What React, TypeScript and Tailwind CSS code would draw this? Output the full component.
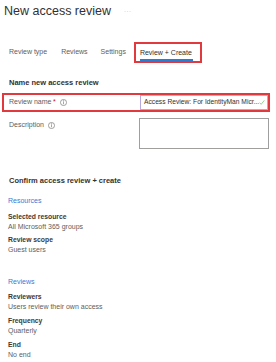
const InfoIcon = () => (
  <svg width="7" height="7" viewBox="0 0 16 16" fill="none" stroke="#605e5c" strokeWidth="1.3">
    <circle cx="8" cy="8" r="7" />
    <line x1="8" y1="7" x2="8" y2="12" />
    <circle cx="8" cy="4.5" r="0.6" fill="#605e5c" />
  </svg>
);

const CheckIcon = () => (
  <svg width="7" height="7" viewBox="0 0 16 16" fill="none" stroke="#5cb85c" strokeWidth="1.8" strokeLinecap="round" strokeLinejoin="round">
    <polyline points="2 9 6 13 14 3" />
  </svg>
);

function Field({ label, value }: { label: string; value: string }) {
  return (
    <div>
      <div className="text-[6.8px] leading-[10px] font-bold text-[#3b3a39]">{label}</div>
      <div className="text-[7px] leading-[10px] text-[#605e5c]">{value}</div>
    </div>
  );
}

export default function App() {
  return (
    <div
      className="w-[276px] h-[362px] bg-white overflow-hidden"
      style={{ fontFamily: '"Liberation Sans", Arial, sans-serif' }}
    >
      <div className="flex items-center h-[20px] pl-[4px] pt-[1px]">
        <span className="text-[12.5px] leading-[18px] text-[#323130]">New access review</span>
        <span className="ml-[13px] text-[6px] tracking-[0.5px] text-[#a19f9d] leading-[10px]">···</span>
      </div>

      <div className="flex items-center h-[21px] mt-[22px] text-[7px] text-[#605e5c]">
        <span className="ml-[9px]">Review type</span>
        <span className="ml-[14px]">Reviews</span>
        <span className="ml-[13px]">Settings</span>
        <div className="ml-[8px] h-[21px] w-[68px] border-2 border-[#e0393e] flex flex-col pl-[4px] pt-[4px]">
          <span className="text-[#323130] leading-[10px]">Review + Create</span>
          <div className="mt-[1px] h-[1.5px] w-[53px] bg-[#2b7cd3]" />
        </div>
      </div>

      <div className="mt-[14px] ml-[9px] text-[7.5px] leading-[12px] font-bold text-[#323130]">
        Name new access review
      </div>

      <div className="mt-[4px] ml-[2px] w-[268px] h-[19px] border-2 border-[#e0393e] flex items-center">
        <div className="flex items-center flex-1 pl-[5px] text-[7px] text-[#605e5c]">
          <span>Review name</span>
          <span className="ml-[1.5px] text-[#c50f1f]">*</span>
          <span className="ml-[4px] flex"><InfoIcon /></span>
        </div>
        <div className="w-[128px] h-[15px] border border-[#b8a8de] flex items-center pl-[3px] pr-[2px]">
          <span className="flex-1 text-[6.7px] text-[#323130] whitespace-nowrap">
            Access Review: For IdentityMan Micr...
          </span>
          <CheckIcon />
        </div>
      </div>

      <div className="mt-[6px] flex">
        <div className="w-[139px] pl-[9px] pt-[2px] flex items-start text-[7px] leading-[10px] text-[#605e5c]">
          <span>Description</span>
          <span className="ml-[4px] mt-[1.5px] flex"><InfoIcon /></span>
        </div>
        <div className="w-[130px] h-[31px] border border-[#a19f9d]" />
      </div>

      <div className="mt-[26px] ml-[9px] text-[7.5px] leading-[12px] font-bold text-[#323130]">
        Confirm access review + create
      </div>

      <div className="ml-[8px]">
        <div className="mt-[9px] text-[7px] leading-[10px] text-[#3a78d4]">Resources</div>
        <div className="mt-[6px]">
          <Field label="Selected resource" value="All Microsoft 365 groups" />
        </div>
        <div className="mt-[3px]">
          <Field label="Review scope" value="Guest users" />
        </div>

        <div className="mt-[22px] text-[7px] leading-[10px] text-[#3a78d4]">Reviews</div>
        <div className="mt-[5px]">
          <Field label="Reviewers" value="Users review their own access" />
        </div>
        <div className="mt-[4px]">
          <Field label="Frequency" value="Quarterly" />
        </div>
        <div className="mt-[4px]">
          <Field label="End" value="No end" />
        </div>
      </div>
    </div>
  );
}
